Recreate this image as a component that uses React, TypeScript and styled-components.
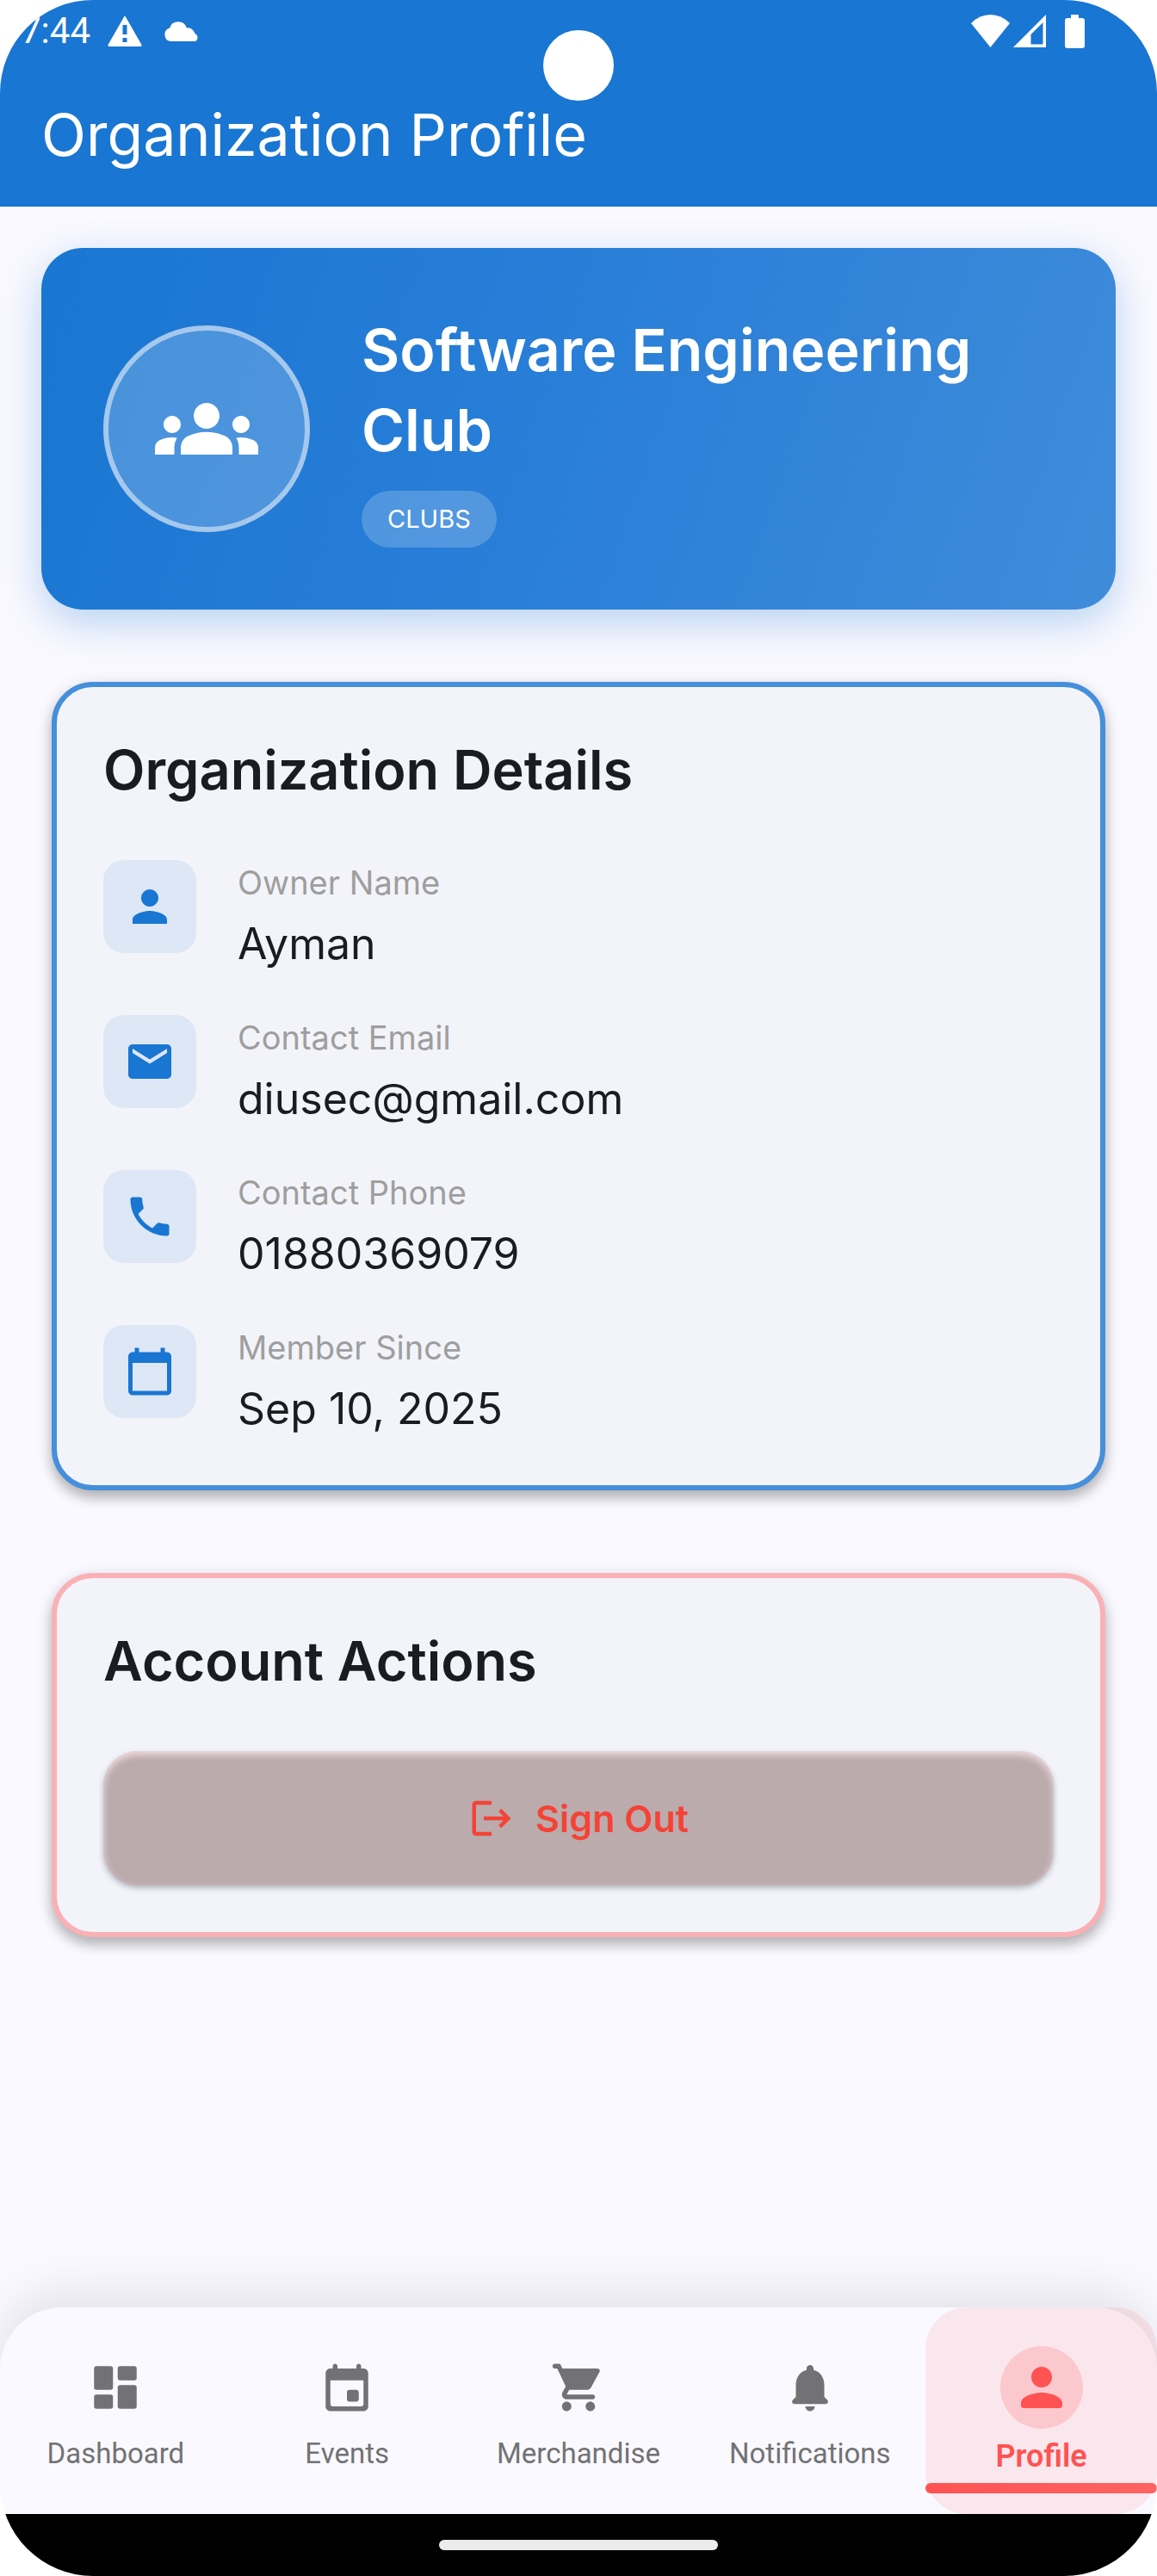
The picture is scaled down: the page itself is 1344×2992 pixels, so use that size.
import React from "react";
import styled, { createGlobalStyle } from "styled-components";
import {
  MdCalendarToday,
  MdEmail,
  MdGroups,
  MdLogout,
  MdPerson,
  MdPhone,
} from "react-icons/md";

const color = {
  primary: "#1976d2",
  page: "#faf9ff",
  card: "#f3f4fa",
  ink: "#191c20",
  muted: "#9e9e9e",
  nav: "#727274",
  accent: "#ff5252",
  danger: "#f44336",
};

const GlobalStyle = createGlobalStyle`
  *, *::before, *::after { box-sizing: border-box; }
  body {
    margin: 0;
    background: #ffffff;
    color: ${color.ink};
    font-family: Inter, "Open Sans", sans-serif;
  }
  h1, h2, dl, dt, dd { margin: 0; font-weight: inherit; }
`;

const Screen = styled.div`
  position: relative;
  display: flex;
  flex-direction: column;
  min-height: 100vh;
  border-radius: 108px;
  overflow: hidden;
  background: ${color.page};
`;

const Header = styled.header`
  background: ${color.primary};
  color: #ffffff;
`;

const StatusBar = styled.div`
  display: flex;
  align-items: center;
  justify-content: space-between;
  height: 72px;
  padding: 0 84px 0 24px;
  font: 400 42px/72px Roboto, sans-serif;
`;

const StatusGroup = styled.div<{ $gap: number }>`
  display: flex;
  align-items: center;
  gap: ${(p) => p.$gap}px;

  svg { display: block; }
`;

const Camera = styled.div`
  position: absolute;
  top: 35px;
  left: 50%;
  width: 82px;
  height: 82px;
  margin-left: -41px;
  border-radius: 50%;
  background: #ffffff;
`;

const AppTitle = styled.h1`
  padding: 0 48px;
  font-size: 68px;
  line-height: 168px;
`;

const Main = styled.main`
  display: flex;
  flex: 1;
  flex-direction: column;
  gap: 72px;
  padding: 48px;
`;

const Hero = styled.section`
  display: flex;
  align-items: center;
  gap: 60px;
  padding: 72px;
  border-radius: 48px;
  background: linear-gradient(109deg, ${color.primary}, #2a7fd8 50%, #3f8cda);
  box-shadow: 0 15px 48px rgba(25, 118, 210, 0.3);
  color: #ffffff;
`;

const Avatar = styled.div`
  display: flex;
  flex: none;
  align-items: center;
  justify-content: center;
  width: 240px;
  height: 240px;
  border: 6px solid #a5c8ed;
  border-radius: 50%;
  background: rgba(255, 255, 255, 0.2);
`;

const HeroText = styled.div`
  display: flex;
  flex: 1;
  flex-direction: column;
  align-items: flex-start;
  gap: 24px;
`;

const HeroName = styled.h2`
  font-size: 68px;
  font-weight: 600;
  line-height: 93px;
`;

const Badge = styled.span`
  padding: 0 30px;
  border-radius: 33px;
  background: rgba(255, 255, 255, 0.2);
  font-size: 29px;
  line-height: 66px;
`;

const Card = styled.section<{ $border: string }>`
  margin: 0 12px;
  padding: 54px;
  border: 6px solid ${(p) => p.$border};
  border-radius: 48px;
  background: ${color.card};
  box-shadow: 0 9px 14px rgba(0, 0, 0, 0.22), 0 4px 20px rgba(0, 0, 0, 0.12);
`;

const Cards = styled.div`
  display: grid;
  gap: 96px;
  padding-top: 12px;
`;

const CardTitle = styled.h2`
  margin-bottom: 63px;
  font-size: 63px;
  font-weight: 600;
  line-height: 84px;
`;

const Details = styled.dl`
  display: grid;
  gap: 48px;
`;

const DetailRow = styled.div`
  display: flex;
  align-items: flex-start;
  gap: 48px;
`;

const IconTile = styled.span`
  display: flex;
  flex: none;
  align-items: center;
  justify-content: center;
  width: 108px;
  height: 108px;
  border-radius: 24px;
  background: #dde7f6;
  color: ${color.primary};
  font-size: 60px;
`;

const DetailText = styled.div`
  display: grid;
  gap: 10px;
`;

const Label = styled.dt`
  color: ${color.muted};
  font-size: 38px;
  line-height: 52px;
`;

const Value = styled.dd`
  font-size: 50px;
  line-height: 70px;
`;

const SignOut = styled.button`
  display: flex;
  align-items: center;
  justify-content: center;
  gap: 24px;
  width: 100%;
  height: 156px;
  padding: 0;
  border: 0;
  border-radius: 40px;
  background: #bbabad;
  box-shadow: inset 0 4px 8px rgba(248, 226, 232, 0.9),
    0 3px 6px rgba(60, 60, 75, 0.35);
  color: ${color.danger};
  font: 600 43px/60px Inter, sans-serif;
`;

const NavBar = styled.nav`
  display: grid;
  grid-template-columns: repeat(5, minmax(0, 1fr));
  height: 240px;
  border-radius: 72px 72px 0 0;
  background: ${color.page};
  box-shadow: 0 -15px 60px rgba(0, 0, 0, 0.1);
`;

const NavLink = styled.a<{ $active: boolean }>`
  position: relative;
  display: flex;
  flex-direction: column;
  align-items: center;
  gap: 6px;
  padding-top: 45px;
  border-radius: 48px;
  background: ${(p) => (p.$active ? "rgba(255, 82, 82, 0.1)" : "transparent")};
  color: ${(p) => (p.$active ? color.accent : color.nav)};
  font-family: Roboto, sans-serif;
  font-size: ${(p) => (p.$active ? 36 : 33)}px;
  font-weight: ${(p) => (p.$active ? 600 : 400)};
  line-height: ${(p) => (p.$active ? 52 : 46)}px;
  text-decoration: none;
`;

const NavIcon = styled.span<{ $active: boolean }>`
  display: flex;
  align-items: center;
  justify-content: center;
  width: 96px;
  height: 96px;
  border-radius: 50%;
  background: ${(p) => (p.$active ? "rgba(255, 82, 82, 0.2)" : "transparent")};
`;

const Indicator = styled.span`
  position: absolute;
  right: 0;
  bottom: 24px;
  left: 0;
  height: 12px;
  border-radius: 6px;
  background: linear-gradient(90deg, ${color.accent}, #ff6363);
`;

const GestureBar = styled.footer`
  display: flex;
  align-items: center;
  justify-content: center;
  height: 72px;
  background: #000000;
`;

const GesturePill = styled.span`
  width: 324px;
  height: 12px;
  border-radius: 6px;
  background: #ebebeb;
`;

const Glyph = ({ size, children }: { size: number; children: React.ReactNode }) => (
  <svg width={size} height={size} viewBox="0 0 24 24" fill="currentColor" aria-hidden="true">
    {children}
  </svg>
);

const details = [
  { label: "Owner Name", value: "Ayman", Icon: MdPerson },
  { label: "Contact Email", value: "diusec@gmail.com", Icon: MdEmail },
  { label: "Contact Phone", value: "01880369079", Icon: MdPhone },
  { label: "Member Since", value: "Sep 10, 2025", Icon: MdCalendarToday },
];

const tabs = [
  {
    label: "Dashboard",
    glyph: (
      <>
        <rect x="3" y="3" width="8" height="10" rx="1" />
        <rect x="3" y="15" width="8" height="6" rx="1" />
        <rect x="13" y="11" width="8" height="10" rx="1" />
        <rect x="13" y="3" width="8" height="6" rx="1" />
      </>
    ),
  },
  {
    label: "Events",
    glyph: (
      <path d="M16 13h-3c-.55 0-1 .45-1 1v3c0 .55.45 1 1 1h3c.55 0 1-.45 1-1v-3c0-.55-.45-1-1-1zm0-10v1H8V3c0-.55-.45-1-1-1s-1 .45-1 1v1H5c-1.110 0-1.990.9-1.990 2L3 20c0 1.100.890 2 2 2h14c1.100 0 2-.9 2-2V6c0-1.100-.9-2-2-2h-1V3c0-.55-.45-1-1-1s-1 .45-1 1zm2 17H6c-.55 0-1-.45-1-1V9h14v10c0 .55-.45 1-1 1z" />
    ),
  },
  {
    label: "Merchandise",
    glyph: (
      <path d="M7 18c-1.100 0-1.990.9-1.990 2S5.900 22 7 22s2-.9 2-2-.9-2-2-2zM1 3c0 .55.45 1 1 1h1l3.600 7.590-1.350 2.440C4.520 15.370 5.480 17 7 17h11c.55 0 1-.45 1-1s-.45-1-1-1H7l1.100-2h7.450c.75 0 1.410-.41 1.750-1.030l3.580-6.490c.37-.66-.11-1.480-.87-1.480H5.210l-.67-1.430c-.16-.35-.52-.57-.9-.57H2c-.55 0-1 .45-1 1zm16 15c-1.100 0-1.990.9-1.990 2s.89 2 1.990 2 2-.9 2-2-.9-2-2-2z" />
    ),
  },
  {
    label: "Notifications",
    glyph: (
      <path d="M12 22c1.100 0 2-.9 2-2h-4c0 1.100.89 2 2 2zm6-6v-5c0-3.070-1.640-5.640-4.500-6.320V4c0-.83-.67-1.500-1.500-1.500s-1.500.67-1.500 1.500v.68C7.630 5.360 6 7.920 6 11v5l-1.290 1.290c-.63.63-.19 1.710.7 1.710h13.170c.89 0 1.340-1.080.71-1.710L18 16z" />
    ),
  },
  {
    label: "Profile",
    active: true,
    glyph: (
      <path d="M12 12c2.210 0 4-1.790 4-4s-1.790-4-4-4-4 1.790-4 4 1.790 4 4 4zm0 2c-2.670 0-8 1.340-8 4v1c0 .55.45 1 1 1h14c.55 0 1-.45 1-1v-1c0-2.660-5.330-4-8-4z" />
    ),
  },
];

export default function App() {
  return (
    <>
      <GlobalStyle />
      <Screen>
        <Header>
          <StatusBar>
            <StatusGroup $gap={20}>
              <span>7:44</span>
              <StatusGroup $gap={25}>
                <svg width="40" height="36" viewBox="0 0 40 36" fill="#fff" aria-hidden="true">
                  <path fillRule="evenodd" d="M20 0 39.500 34q.5 2-1.500 2H2Q0 36 .5 34ZM17.500 11v11h5V11Zm0 15v5h5v-5Z" />
                </svg>
                <svg width="42" height="24" viewBox="0 0 42 24" fill="#fff" aria-hidden="true">
                  <path d="M8 24A8 8 0 0 1 7 8.500 10.500 10.500 0 0 1 27 8.500Q33 7 36.500 15A5 5 0 0 1 37 24Z" />
                </svg>
              </StatusGroup>
            </StatusGroup>
            <StatusGroup $gap={22}>
              <StatusGroup $gap={4}>
                <svg width="45" height="38" viewBox="0 0 45 38" fill="#fff" aria-hidden="true">
                  <path d="M0 10Q10 0 22.500 0T45 10L22.500 38Z" />
                </svg>
                <svg width="38" height="38" viewBox="0 0 38 38" fill="#fff" aria-hidden="true">
                  <path fillRule="evenodd" d="M38 0V38H0ZM34.500 9 20.500 23V34.500h14Z" />
                </svg>
              </StatusGroup>
              <svg width="23" height="39" viewBox="0 0 23 39" fill="#fff" aria-hidden="true">
                <path d="M7 0h9v4h4q3 0 3 3v29q0 3-3 3H3q-3 0-3-3V7q0-3 3-3h4Z" />
              </svg>
            </StatusGroup>
          </StatusBar>
          <AppTitle>Organization Profile</AppTitle>
        </Header>
        <Camera />

        <Main>
          <Hero>
            <Avatar>
              <MdGroups size={120} />
            </Avatar>
            <HeroText>
              <HeroName>Software Engineering Club</HeroName>
              <Badge>CLUBS</Badge>
            </HeroText>
          </Hero>

          <Cards>
            <Card $border="#458fdb">
              <CardTitle>Organization Details</CardTitle>
              <Details>
                {details.map(({ label, value, Icon }) => (
                  <DetailRow key={label}>
                    <IconTile>
                      <Icon />
                    </IconTile>
                    <DetailText>
                      <Label>{label}</Label>
                      <Value>{value}</Value>
                    </DetailText>
                  </DetailRow>
                ))}
              </Details>
            </Card>

            <Card $border="#f9b1b6">
              <CardTitle>Account Actions</CardTitle>
              <SignOut type="button">
                <MdLogout size={54} />
                Sign Out
              </SignOut>
            </Card>
          </Cards>
        </Main>

        <NavBar aria-label="Main">
          {tabs.map(({ label, glyph, active = false }) => (
            <NavLink
              key={label}
              href={`#${label.toLowerCase()}`}
              $active={active}
              aria-current={active ? "page" : undefined}
            >
              <NavIcon $active={active}>
                <Glyph size={active ? 72 : 66}>{glyph}</Glyph>
              </NavIcon>
              {label}
              {active && <Indicator />}
            </NavLink>
          ))}
        </NavBar>
        <GestureBar>
          <GesturePill />
        </GestureBar>
      </Screen>
    </>
  );
}
